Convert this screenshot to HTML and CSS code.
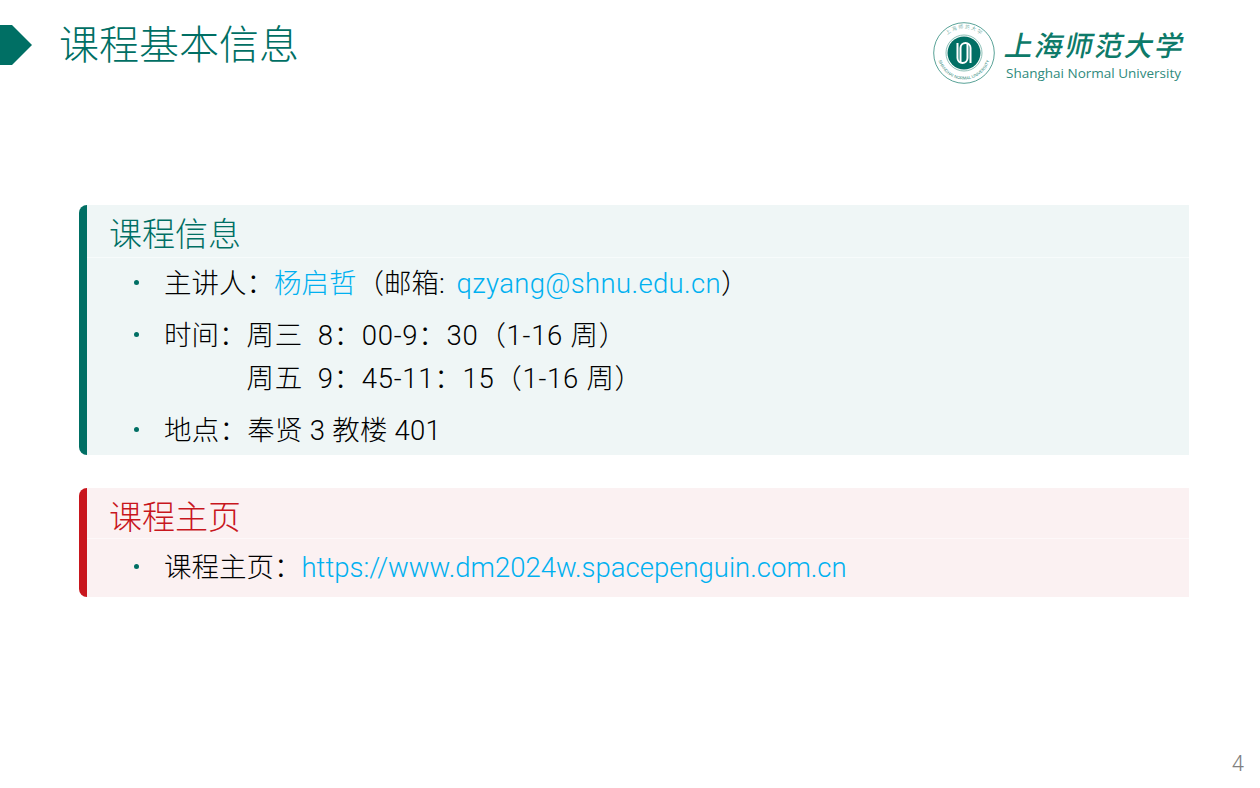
FILE: index.html
```html
<!DOCTYPE html>
<html lang="zh-CN">
<head>
    <meta charset="UTF-8">
    <meta name="viewport" content="width=device-width, initial-scale=1.0">
    <title>课程基本信息</title>
    <link rel="stylesheet" href="styles.css">
</head>
<body>
    <div class="slide">
        <header class="top">
            <div class="title-wrap">
                <svg class="arrow" width="32" height="40" viewBox="0 0 32 40"><polygon points="0,0 12,0 32,20 12,40 0,40" fill="#006f64"/></svg>
                <h1>课程基本信息</h1>
            </div>
            <div class="logo">
                <svg class="seal" width="62" height="62" viewBox="0 0 62 62">
                    <defs>
                        <path id="ringTop" d="M6.500 31a24.500 24.500 0 0 1 49 0"/>
                        <path id="ringBottom" d="M4.500 31a26.500 26.500 0 0 0 53 0"/>
                    </defs>
                    <circle cx="31" cy="31" r="30.300" fill="none" stroke="#2f8a7c" stroke-width="0.800"/>
                    <circle cx="31" cy="31" r="18" fill="none" stroke="#6fb0a5" stroke-width="0.800"/>
                    <circle cx="31" cy="31" r="16.500" fill="#006f64"/>
                    <path d="M24.500 21v15a5 5 0 0 0 10 0V21" fill="none" stroke="#fff" stroke-width="2"/>
                    <path d="M27.500 41V26a5 5 0 0 1 10 0v15" fill="none" stroke="#fff" stroke-width="2"/>
                    <text class="ring-cn"><textPath href="#ringTop" startOffset="50%" text-anchor="middle">上 海 师 范 大 学</textPath></text>
                    <text class="ring-en"><textPath href="#ringBottom" startOffset="50%" text-anchor="middle">SHANGHAI NORMAL UNIVERSITY</textPath></text>
                </svg>
                <div class="logo-text">
                    <div class="logo-cn">上海师范大学</div>
                    <div class="logo-en">Shanghai Normal University</div>
                </div>
            </div>
        </header>

        <main class="content">
            <section class="card card-green">
                <h2>课程信息</h2>
                <ul>
                    <li>主讲人：<a>杨启哲</a>（邮箱: <a class="email">qzyang@shnu.edu.cn</a>）</li>
                    <li>
                        <div class="row">
                            <span>时间：</span>
                            <div class="times">
                                <div>周三&nbsp; 8：00-9：30（1-16 周）</div>
                                <div>周五&nbsp; 9：45-11：15（1-16 周）</div>
                            </div>
                        </div>
                    </li>
                    <li class="place">地点：奉贤 3 教楼 401</li>
                </ul>
            </section>
            <section class="card card-red">
                <h2>课程主页</h2>
                <ul>
                    <li>课程主页：<a>https://www.dm2024w.spacepenguin.com.cn</a></li>
                </ul>
            </section>
        </main>

        <footer class="page-no">4</footer>
    </div>
</body>
</html>
```
FILE: styles.css
```css
* {
    box-sizing: border-box;
}
body {
    margin: 0;
    background-color: #fff;
    font-family: "Roboto", "Noto Sans CJK SC", sans-serif;
    font-weight: 300;
    color: #000;
}
.slide {
    width: 1260px;
    height: 788px;
    display: flex;
    flex-direction: column;
    overflow: hidden;
}
.top {
    height: 205px;
    display: flex;
    justify-content: space-between;
    align-items: flex-start;
    flex-shrink: 0;
}
.title-wrap {
    display: flex;
    align-items: flex-start;
    gap: 27px;
    margin-top: 25px;
}
.arrow {
    display: block;
}
h1 {
    margin: 0;
    padding-top: 1px;
    font-size: 40px;
    line-height: 40px;
    font-weight: 300;
    color: #006f64;
}
.logo {
    display: flex;
    gap: 11px;
    margin: 22px 74px 0 0;
}
.ring-cn {
    font-size: 5px;
    fill: #2f8a7c;
}
.ring-en {
    font-size: 4.200px;
    fill: #2f8a7c;
    font-family: "Liberation Sans", sans-serif;
}
.logo-text {
    padding-top: 4px;
}
.logo-cn {
    font-family: "Noto Sans CJK SC", sans-serif;
    font-weight: 500;
    font-size: 28px;
    line-height: 37px;
    letter-spacing: 2px;
    white-space: nowrap;
    color: #0d7a69;
    transform: skewX(-12deg);
}
.logo-en {
    font-family: "Open Sans", sans-serif;
    font-weight: 400;
    font-size: 13.500px;
    line-height: 20px;
    color: #2f8a7c;
}
.content {
    display: flex;
    flex-direction: column;
    gap: 33px;
    padding-left: 79px;
    padding-right: 71px;
}
.card {
    border-left: 8px solid;
    border-radius: 8px 0 0 8px;
}
.card h2 {
    margin: 0;
    height: 53px;
    padding-left: 22px;
    font-size: 33px;
    line-height: 59px;
    font-weight: 300;
    border-bottom: 1px solid rgba(255, 255, 255, 0.5);
}
.card-green {
    height: 250px;
    background-color: #eff6f6;
    border-color: #006f64;
}
.card-green h2 {
    color: #006f64;
}
.card-red {
    height: 109px;
    background-color: #fbf1f2;
    border-color: #c8161d;
}
.card-red h2 {
    color: #c8161d;
    height: 51px;
}
.card ul {
    list-style: none;
    margin: 0;
    padding: 4px 0 0 77px;
    font-size: 27.500px;
    line-height: 43px;
}
.card-red ul {
    padding-top: 7px;
}
.card li {
    position: relative;
    margin-bottom: 9px;
}
.card li::before {
    content: "";
    position: absolute;
    left: -30px;
    top: 18px;
    width: 5px;
    height: 5px;
    border-radius: 50%;
    background-color: #006f64;
}
.row {
    display: flex;
}
.times {
    letter-spacing: 0.700px;
}
.place {
    letter-spacing: 0.250px;
}
.card a {
    color: #00b0f0;
}
.card .email {
    margin-left: 5px;
    letter-spacing: 0.350px;
}
.page-no {
    margin-top: auto;
    padding: 0 16px 11px 0;
    text-align: right;
    font-size: 22px;
    line-height: 26px;
    color: #808080;
}
```
